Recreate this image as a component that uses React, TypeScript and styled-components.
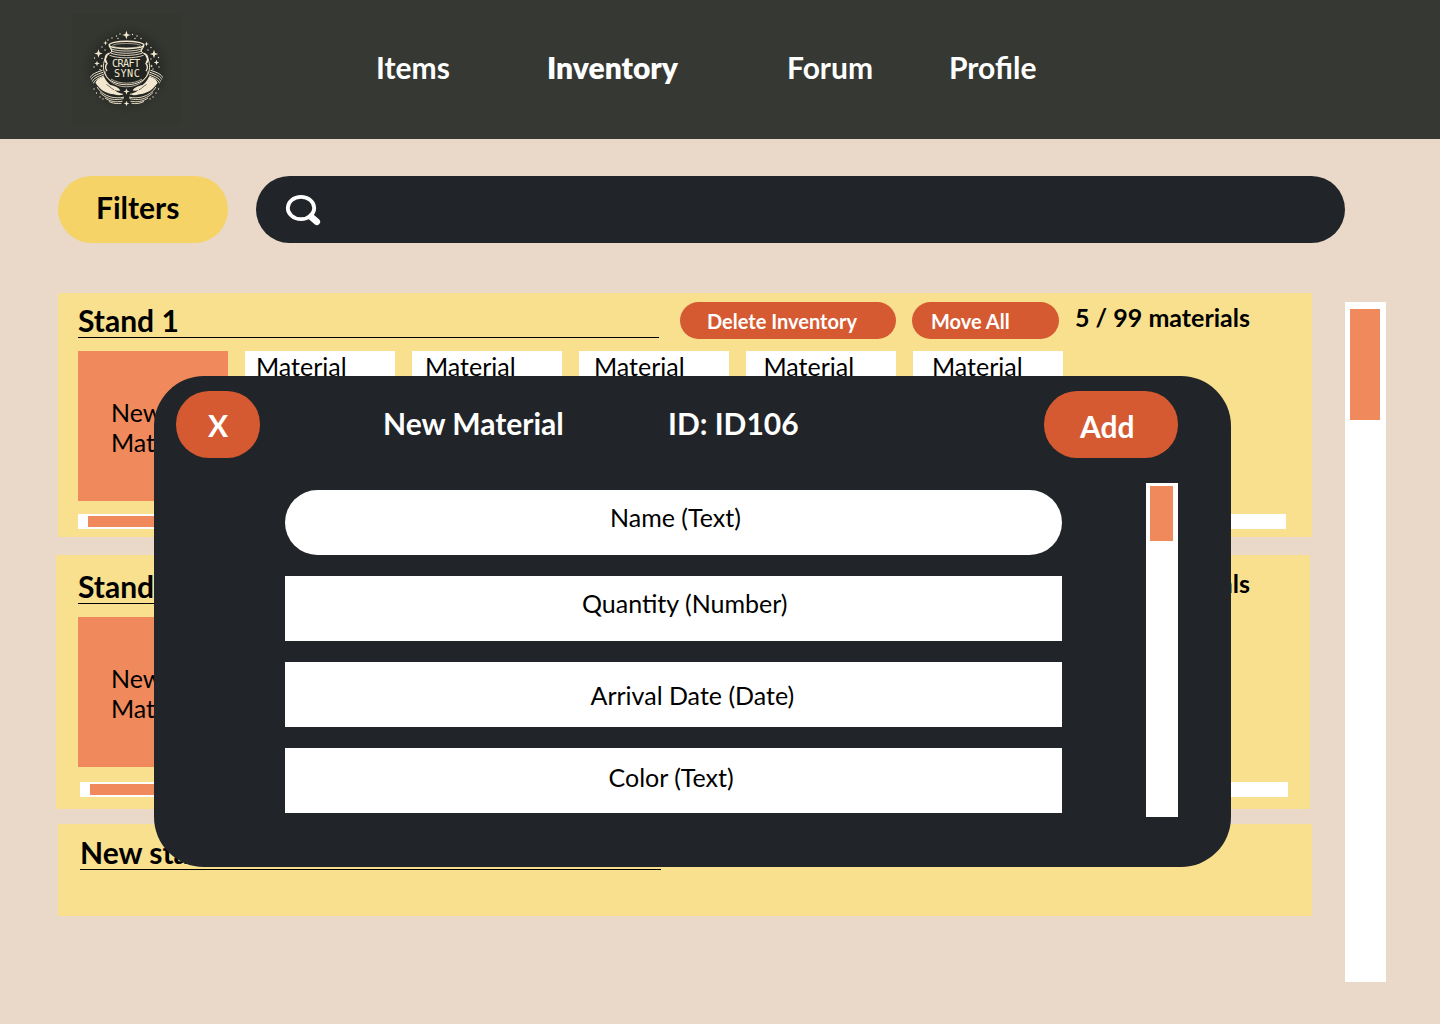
import React from "react";
import styled, { createGlobalStyle } from "styled-components";

const color = {
  page: "#ead9c8",
  header: "#363833",
  dark: "#212529",
  filter: "#f5d366",
  stand: "#f8e08e",
  coral: "#f08a5d",
  rust: "#d55a31",
  cream: "#f3e8cf",
};

const GlobalStyle = createGlobalStyle`
  *, *::before, *::after { box-sizing: border-box; }
  body {
    margin: 0;
    background: ${color.page};
    font-family: Lato, "Liberation Sans", sans-serif;
    color: #000;
  }
  button { font-family: inherit; border: 0; padding: 0; margin: 0; text-align: left; }
  h2, p { margin: 0; }
`;

const Page = styled.div`
  position: relative;
  width: 1440px;
  height: 1024px;
  overflow: hidden;
  background: ${color.page};
`;

const Header = styled.header`
  display: flex;
  align-items: flex-start;
  height: 139px;
  padding: 14px 0 0 72px;
  background: ${color.header};
`;

const LogoFrame = styled.div`
  width: 110px;
  height: 110px;
  background: #343630;
  svg { display: block; }
`;

const Nav = styled.nav`
  display: grid;
  grid-template-columns: 171px 240px 162px auto;
  margin: 35px 0 0 194px;
`;

const NavLink = styled.a<{ $active?: boolean }>`
  color: #fff;
  font-size: 30px;
  line-height: 36px;
  font-weight: ${(p) => (p.$active ? 800 : 700)};
`;

const Toolbar = styled.div`
  display: flex;
  gap: 28px;
  padding: 37px 0 0 58px;
`;

const FilterButton = styled.button`
  width: 170px;
  height: 67px;
  padding: 0 0 6px 38px;
  border-radius: 34px;
  background: ${color.filter};
  font-size: 30px;
  line-height: 36px;
  font-weight: 700;
  color: #000;
`;

const SearchBar = styled.div`
  width: 1089px;
  height: 67px;
  padding: 18px 0 0 29px;
  border-radius: 34px;
  background: ${color.dark};
`;

const Content = styled.main`
  display: flex;
  justify-content: space-between;
  padding: 50px 54px 0 56px;
`;

const StandList = styled.div`
  display: flex;
  flex-direction: column;
`;

const Stand = styled.section<{ $height: number; $indent: number; $top: number; $gap: number }>`
  width: 1254px;
  height: ${(p) => p.$height}px;
  margin: 0 0 ${(p) => p.$gap}px ${(p) => p.$indent}px;
  padding: ${(p) => p.$top}px 0 0 ${(p) => 22 - p.$indent}px;
  background: ${color.stand};
`;

const StandHead = styled.div`
  display: flex;
  align-items: flex-start;
  height: 49px;
`;

const StandTitle = styled.h2<{ $inset?: number }>`
  width: 581px;
  height: 36px;
  margin: 0 21px 0 ${(p) => p.$inset ?? 0}px;
  border-bottom: 1px solid #000;
  font-size: 30px;
  line-height: 36px;
  font-weight: 700;
`;

const Actions = styled.div`
  display: flex;
  gap: 16px;
  width: 395px;
`;

const SmallButton = styled.button<{ $width: number; $pad: number }>`
  width: ${(p) => p.$width}px;
  height: 37px;
  padding: 0 0 0 ${(p) => p.$pad}px;
  border-radius: 19px;
  background: ${color.rust};
  color: #fff;
  font-size: 20px;
  line-height: 24px;
  font-weight: 700;
`;

const Count = styled.p`
  font-size: 25px;
  line-height: 30px;
  font-weight: 700;
`;

const Cards = styled.div`
  display: flex;
  gap: 17px;
`;

const NewCard = styled.div`
  width: 150px;
  height: 150px;
  padding: 46px 0 0 33px;
  background: ${color.coral};
  font-size: 25px;
  line-height: 30px;
`;

const Card = styled.div<{ $pad: number }>`
  width: 150px;
  height: 150px;
  padding: 0 0 0 ${(p) => p.$pad}px;
  background: #fff;
  font-size: 25px;
  line-height: 30px;
`;

const HScroll = styled.div<{ $top: number; $left: number }>`
  width: 1208px;
  height: 15px;
  margin: ${(p) => p.$top}px 0 0 ${(p) => p.$left}px;
  padding: 2px 10px;
  background: #fff;
`;

const HThumb = styled.div`
  width: 420px;
  height: 11px;
  background: ${color.coral};
`;

const PageScroll = styled.div`
  width: 41px;
  height: 680px;
  margin-top: 9px;
  padding: 7px 6px 0 5px;
  background: #fff;
`;

const VThumb = styled.div<{ $height: number }>`
  height: ${(p) => p.$height}px;
  background: ${color.coral};
`;

const Dialog = styled.div`
  position: absolute;
  left: 154px;
  top: 376px;
  width: 1077px;
  height: 491px;
  padding: 15px 53px 0 22px;
  border-radius: 50px;
  background: ${color.dark};
  color: #fff;
`;

const DialogHead = styled.div`
  display: flex;
  align-items: flex-start;
  height: 92px;
`;

const DialogButton = styled.button<{ $width: number; $pad: number; $drop: number }>`
  display: flex;
  align-items: flex-start;
  width: ${(p) => p.$width}px;
  height: 67px;
  padding: ${(p) => p.$drop}px 0 0 ${(p) => p.$pad}px;
  border-radius: 33px;
  background: ${color.rust};
  color: #fff;
  font-size: 30px;
  line-height: 36px;
  font-weight: 700;
`;

const DialogTitle = styled.p<{ $width: number; $before?: number }>`
  width: ${(p) => p.$width}px;
  margin: 14px 0 0 ${(p) => p.$before ?? 0}px;
  font-size: 30px;
  line-height: 36px;
  font-weight: 700;
`;

const DialogBody = styled.div`
  display: flex;
  justify-content: space-between;
  padding-left: 109px;
`;

const Fields = styled.div`
  display: flex;
  flex-direction: column;
  gap: 21px;
  padding-top: 7px;
`;

const Field = styled.div<{ $left: number; $top: number; $round?: boolean }>`
  width: 777px;
  height: 65px;
  padding: ${(p) => p.$top}px 0 0 ${(p) => p.$left}px;
  border-radius: ${(p) => (p.$round ? 33 : 0)}px;
  background: #fff;
  color: #000;
  font-size: 25px;
  line-height: 30px;
`;

const DialogScroll = styled.div`
  width: 32px;
  height: 334px;
  padding: 3px 5px 0 4px;
  background: #fff;
`;

const stars: [number, number, number][] = [
  [66.4, 35, 4.2], [38.5, 53.5, 4.2], [94, 54, 4.2], [45.5, 43, 2.4], [86.5, 44, 2.4],
  [37, 63.5, 2.8], [96.5, 62.5, 2.8], [66.5, 91.5, 3.2], [66.5, 103.5, 2.8],
  [91.5, 66, 1.6], [41.5, 66, 1.6],
];

const dots: [number, number][] = [
  [52, 38], [56.5, 36], [60, 34], [72.5, 34.5], [77, 36], [81, 38.5], [48, 40], [58, 38.5],
  [75, 38.5], [42, 47], [91, 47.5], [45, 50], [88, 50], [34.5, 58], [98.5, 57.5],
  [42, 58.5], [91, 59], [40, 69.5], [93, 69], [34, 89], [98.5, 89], [36.5, 93],
  [96, 93], [40, 97], [93, 97], [43, 99], [90, 99], [99, 67], [34, 67],
];

const Hand = () => (
  <g>
    <path d="M30.500 77.500c1-3 5-5 12-7.200M31.300 79.500c1-3 5-5 12-7.300M32.300 81.500c1-3 5-5 11.500-7.300M33.500 83.300c1-3 4-5 10.500-7.300" fill="none" stroke={color.cream} strokeWidth="1" />
    <path d="M35.500 83c.5-3 3.500-5 8.500-6.300 1.500 3 3.500 6.300 6.500 8.300 3.500.8 8 2.300 9.800 5.200-1.300 1.200-3.500.6-6.300-.4 2 2 5 3.300 9.500 4.200-1.500 1.500-6 1.500-9.800.3C46.500 93.500 40.500 90.500 35.500 83Z" fill={color.cream} />
    <path d="M37 87c3 5 8 8.500 14 10 4 1 8 1 13 .2M40 92.500c4 4.200 9 6.700 14.500 7 4 .2 6.500-.2 9-1M45 98c5 3.600 11 4.400 17.500 3.200M49 101.500c4 2 8 2.500 12.500 1.800" fill="none" stroke={color.cream} strokeWidth=".9" />
    <path d="M46.500 84.500c3 1.500 4 3.500 7.500 5.300" fill="none" stroke="#2c2c27" strokeWidth=".7" />
  </g>
);

const Logo = () => (
  <svg width="110" height="110" viewBox="12 14 110 110" role="img">
    <defs>
      <radialGradient id="glow">
        <stop offset="0" stopColor="#1d1f1d" />
        <stop offset=".65" stopColor="#262824" />
        <stop offset="1" stopColor="#343630" stopOpacity="0" />
      </radialGradient>
    </defs>
    <circle cx="66.500" cy="69" r="48" fill="url(#glow)" />
    <g fill="none" stroke={color.cream}>
      <ellipse cx="66.500" cy="45" rx="17.300" ry="3.700" strokeWidth="1.500" />
      <ellipse cx="66.500" cy="45.700" rx="14" ry="2.200" strokeWidth=".6" />
      <path d="M49.200 46c1 2.500 3 3 2.500 6M83.800 46c-1 2.500-3 3-2.500 6" strokeWidth="1.200" />
      <path d="M51 48.800c7 3 24 3 31 0M51.500 51c7 3 23 3 30 0M50.500 53c8 3.200 24 3.200 32 0M49.500 55.300c9 3.400 25 3.400 34 0" strokeWidth=".9" />
      <path d="M51.500 52C43 56 40.500 70 47.500 78c9 9 29 9 38 0 7-8 4.500-22-4-26" strokeWidth="1" />
      <path d="M44.800 71c1 8 9 15.800 21.700 15.800S87.200 79 88.200 71M51 79c8 5.500 23 5.500 31 0" strokeWidth=".7" />
      <path d="M49 53.500c-4.500 1-5 8-2 10-2 2.500-1.500 5.500 0 7.500M84 53.500c4.500 1 5 8 2 10 2 2.500 1.500 5.500 0 7.500M47 56c-2 1.500-2 5 0 6.500M86 56c2 1.500 2 5 0 6.500" strokeWidth="1.300" />
    </g>
    <g fill={color.cream} fontFamily='"DejaVu Sans Mono", monospace' fontSize="10.200">
      <text x="52" y="66.500" textLength="28.200" lengthAdjust="spacing">CRAFT</text>
      <text x="54" y="76.500" textLength="25.800" lengthAdjust="spacing">SYNC</text>
    </g>
    <Hand />
    <g transform="translate(133 0) scale(-1 1)"><Hand /></g>
    <g fill={color.cream}>
      {stars.map(([x, y, r], i) => (
        <path key={i} d={`M${x} ${y - r}L${x + r * 0.26} ${y - r * 0.26}L${x + r} ${y}L${x + r * 0.26} ${y + r * 0.26}L${x} ${y + r}L${x - r * 0.26} ${y + r * 0.26}L${x - r} ${y}L${x - r * 0.26} ${y - r * 0.26}Z`} />
      ))}
      {dots.map(([x, y], i) => <circle key={i} cx={x} cy={y} r=".65" />)}
    </g>
  </svg>
);

const SearchIcon = () => (
  <svg width="36" height="34" viewBox="0 0 36 34" fill="none" stroke="#fff">
    <ellipse cx="16" cy="14" rx="13.200" ry="11.200" strokeWidth="3.800" />
    <path d="M26 22.800l5.800 5" strokeWidth="6.600" strokeLinecap="round" />
  </svg>
);

const cardPads = [11, 13, 15, 17.5, 19];

type StandContentsProps = {
  title: string;
  scrollTop: number;
  scrollLeft: number;
  actions?: boolean;
};

const StandContents = ({ title, scrollTop, scrollLeft, actions }: StandContentsProps) => (
  <>
    <StandHead>
      <StandTitle>{title}</StandTitle>
      <Actions>
        {actions && (
          <>
            <SmallButton $width={216} $pad={27}>Delete Inventory</SmallButton>
            <SmallButton $width={147} $pad={19}>Move All</SmallButton>
          </>
        )}
      </Actions>
      <Count>5 / 99 materials</Count>
    </StandHead>
    <Cards>
      <NewCard>New<br />Material</NewCard>
      {cardPads.map((pad) => <Card key={pad} $pad={pad}>{actions && "Material"}</Card>)}
    </Cards>
    <HScroll $top={scrollTop} $left={scrollLeft}><HThumb /></HScroll>
  </>
);

export default function App() {
  return (
    <Page>
      <GlobalStyle />
      <Header>
        <LogoFrame><Logo /></LogoFrame>
        <Nav>
          <NavLink>Items</NavLink>
          <NavLink $active>Inventory</NavLink>
          <NavLink>Forum</NavLink>
          <NavLink>Profile</NavLink>
        </Nav>
      </Header>
      <Toolbar>
        <FilterButton>Filters</FilterButton>
        <SearchBar><SearchIcon /></SearchBar>
      </Toolbar>
      <Content>
        <StandList>
          <Stand $height={244} $indent={2} $top={9} $gap={18}>
            <StandContents title="Stand 1" scrollTop={13} scrollLeft={0} actions />
          </Stand>
          <Stand $height={254} $indent={0} $top={13} $gap={15}>
            <StandContents title="Stand 2" scrollTop={15} scrollLeft={2} />
          </Stand>
          <Stand $height={92} $indent={2} $top={10} $gap={0}>
            <StandTitle $inset={2}>New stand</StandTitle>
          </Stand>
        </StandList>
        <PageScroll><VThumb $height={111} /></PageScroll>
      </Content>
      <Dialog role="dialog">
        <DialogHead>
          <DialogButton $width={84} $pad={32} $drop={16}>X</DialogButton>
          <DialogTitle $width={285} $before={123}>New Material</DialogTitle>
          <DialogTitle $width={376}>ID: ID106</DialogTitle>
          <DialogButton $width={134} $pad={36} $drop={17}>Add</DialogButton>
        </DialogHead>
        <DialogBody>
          <Fields>
            <Field $round $left={325} $top={12}>Name (Text)</Field>
            <Field $left={297} $top={12}>Quantity (Number)</Field>
            <Field $left={305.5} $top={18}>Arrival Date (Date)</Field>
            <Field $left={323.5} $top={14}>Color (Text)</Field>
          </Fields>
          <DialogScroll><VThumb $height={55} /></DialogScroll>
        </DialogBody>
      </Dialog>
    </Page>
  );
}
